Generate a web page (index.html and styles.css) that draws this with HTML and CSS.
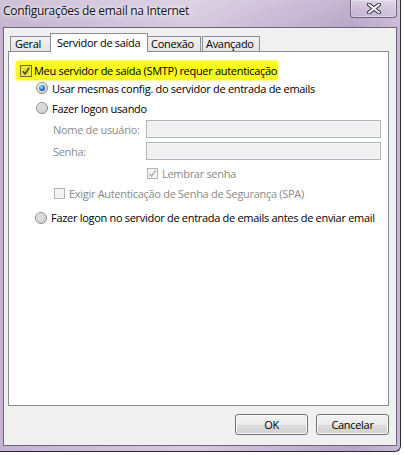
FILE: index.html
```html
<!DOCTYPE html>
<html lang="pt">
<head>
<meta charset="utf-8">
<title>Configurações de email na Internet</title>
<link rel="stylesheet" href="styles.css">
</head>
<body>
<div class="window">
  <div class="titlebar">
    <span class="title">Configurações de email na Internet</span>
    <div class="close">
      <svg width="14" height="11" viewBox="0 0 14 11"><path d="M2 1.5 L12 9.5 M12 1.5 L2 9.5" stroke="#3b3347" stroke-width="4" stroke-linecap="round"/><path d="M2 1.5 L12 9.5 M12 1.5 L2 9.5" stroke="#ffffff" stroke-width="2" stroke-linecap="round"/></svg>
    </div>
  </div>
  <div class="client">
    <div class="tabs">
      <div class="tab t-geral">Geral</div>
      <div class="tab active">Servidor de saída</div>
      <div class="tab t-conexao">Conexão</div>
      <div class="tab t-avancado">Avançado</div>
    </div>
    <div class="panel">
      <div class="row hl">
        <svg class="box" width="12" height="12" viewBox="0 0 12 12"><rect x="0.5" y="0.5" width="11" height="11" fill="#eded3a" stroke="#6d6d24"/><rect x="2.5" y="2.5" width="7" height="7" fill="#e1e12a"/><path d="M2.8 6.2 L5 9 L9.3 2.6" fill="none" stroke="#4b4b12" stroke-width="1.6"/></svg>
        <span>Meu servidor de saída (SMTP) requer autenticação</span>
      </div>
      <div class="row radio r1">
        <svg class="rad" width="12" height="12" viewBox="0 0 12 12"><defs><radialGradient id="rg" cx="40%" cy="35%" r="70%"><stop offset="0" stop-color="#ffffff"/><stop offset="1" stop-color="#cfcfcf"/></radialGradient><radialGradient id="rb" cx="40%" cy="35%" r="70%"><stop offset="0" stop-color="#bfe6ff"/><stop offset="0.5" stop-color="#3a8fd6"/><stop offset="1" stop-color="#113f7a"/></radialGradient></defs><circle cx="6" cy="6" r="5.5" fill="url(#rg)" stroke="#8b8b8b"/><circle cx="6" cy="6" r="3" fill="url(#rb)"/></svg>
        <span>Usar mesmas config. do servidor de entrada de emails</span>
      </div>
      <div class="row radio r2">
        <svg class="rad" width="12" height="12" viewBox="0 0 12 12"><circle cx="6" cy="6" r="5.5" fill="url(#rg)" stroke="#8b8b8b"/><circle cx="6" cy="6" r="3.5" fill="#dcdcdc" stroke="#c4c4c4" stroke-width="0.6"/></svg>
        <span>Fazer logon usando</span>
      </div>
      <div class="row field f1">
        <span class="lbl">Nome de usuário:</span>
        <div class="input"></div>
      </div>
      <div class="row field f2">
        <span class="lbl">Senha:</span>
        <div class="input"></div>
      </div>
      <div class="row dis lembrar">
        <svg class="box" width="11" height="11" viewBox="0 0 11 11"><rect x="0.5" y="0.5" width="10" height="10" fill="#f4f4f4" stroke="#b5b5b5"/><path d="M2.5 5.8 L4.6 8.3 L8.5 2.5" fill="none" stroke="#b0b0b0" stroke-width="1.4"/></svg>
        <span>Lembrar senha</span>
      </div>
      <div class="row dis exigir">
        <svg class="box" width="11" height="11" viewBox="0 0 11 11"><rect x="0.5" y="0.5" width="10" height="10" fill="#f4f4f4" stroke="#b5b5b5"/></svg>
        <span>Exigir Autenticação de Senha de Segurança (SPA)</span>
      </div>
      <div class="row radio r3">
        <svg class="rad" width="12" height="12" viewBox="0 0 12 12"><circle cx="6" cy="6" r="5.5" fill="url(#rg)" stroke="#8b8b8b"/><circle cx="6" cy="6" r="3.5" fill="#dcdcdc" stroke="#c4c4c4" stroke-width="0.6"/></svg>
        <span>Fazer logon no servidor de entrada de emails antes de enviar email</span>
      </div>
    </div>
    <div class="buttons">
      <div class="btn">OK</div>
      <div class="btn">Cancelar</div>
    </div>
  </div>
</div>
</body>
</html>
```

FILE: styles.css
```css
html, body {
  margin: 0;
  padding: 0;
}
body {
  width: 404px;
  height: 455px;
  overflow: hidden;
  background: #ffffff;
  font-family: "Open Sans", "Noto Sans", "DejaVu Sans", sans-serif;
  font-size: 11px;
  letter-spacing: -0.3px;
  color: #000;
}
.window {
  box-sizing: border-box;
  width: 401px;
  height: 452px;
  border-right: 1px solid #2f2838;
  border-bottom: 1px solid #2f2838;
  border-bottom-right-radius: 6px;
  background:
    linear-gradient(180deg, rgba(255,255,255,0.18), rgba(255,255,255,0) 30px),
    linear-gradient(90deg, #c3b3cf 0%, #cfc1da 30%, #d6c9df 48%, #c6b5d2 70%, #b8a5c6 88%, #c9b8d6 100%);
  display: flex;
  flex-direction: column;
}
.titlebar {
  height: 27px;
  display: flex;
  align-items: flex-start;
  justify-content: space-between;
}
.title {
  margin: 2px 0 0 3px;
  font-size: 12px;
  line-height: 18px;
  color: #111;
  text-shadow: 0 0 6px rgba(255,255,255,0.9), 0 0 3px rgba(255,255,255,0.9);
}
.close {
  box-sizing: border-box;
  width: 47px;
  height: 18px;
  margin-right: 3px;
  border: 1px solid #6e6180;
  border-top: none;
  border-radius: 0 0 4px 4px;
  background: linear-gradient(180deg, rgba(255,255,255,0.35), rgba(255,255,255,0.12) 55%, rgba(210,200,225,0.3));
  box-shadow: inset 0 0 0 1px rgba(255,255,255,0.35);
  display: flex;
  align-items: center;
  justify-content: center;
}
.client {
  box-sizing: border-box;
  margin-left: 3px;
  width: 394px;
  height: 419px;
  border: 1px solid #6f6479;
  background: #f0f0f0;
  display: flex;
  flex-direction: column;
}
.tabs {
  height: 18px;
  margin-top: 5px;
  padding-left: 6px;
  display: flex;
  align-items: flex-end;
}
.tab {
  box-sizing: border-box;
  height: 15px;
  border: 1px solid #898c95;
  border-bottom: none;
  background: linear-gradient(180deg, #f3f3f3, #e4e4e4);
  font-size: 11px;
  line-height: 14px;
  padding-left: 4px;
  margin-right: 1px;
}
.t-geral { width: 40px; border-right: none; margin-right: 0; }
.tab.active {
  width: 98px;
  height: 19px;
  margin-bottom: -1px;
  background: #ffffff;
  position: relative;
  z-index: 1;
  padding-top: 1px;
  padding-left: 6px;
  line-height: 15px;
  margin-right: 0;
}
.t-conexao { width: 53px; border-left: none; padding-left: 3px; }
.t-avancado { width: 58px; margin-left: 0; border-left: 1px solid #898c95; padding-left: 3px; }
.panel {
  box-sizing: border-box;
  margin-left: 4px;
  width: 381px;
  height: 355px;
  border: 1px solid #898c95;
  background: #ffffff;
  padding-top: 9px;
  display: flex;
  flex-direction: column;
}
.row {
  display: flex;
  align-items: center;
  white-space: nowrap;
}
.hl {
  box-sizing: border-box;
  width: 262px;
  height: 19px;
  margin-left: 7px;
  padding-left: 4px;
  gap: 2px;
  background: #fafa1e;
  border-radius: 3px;
  box-shadow: 0 0 2px 1px rgba(250,250,50,0.7);
}
.radio { height: 16px; gap: 4px; }
.r1 { margin-left: 27px; }
.r2 { margin-left: 27px; margin-top: 4px; }
.r3 { margin-left: 26px; margin-top: 10px; height: 15px; }
.field { height: 18px; margin-top: 4px; margin-left: 44px; }
.lbl { width: 93px; color: #8a8a8a; }
.input {
  box-sizing: border-box;
  width: 235px;
  height: 18px;
  border: 1px solid #adb3b9;
  background: #f0f0f0;
  box-shadow: inset 0 0 0 1px #f7f7f7;
}
.dis { color: #8a8a8a; height: 14px; margin-top: 6px; gap: 4px; }
.lembrar { margin-left: 138px; }
.exigir { margin-left: 45px; }
.box, .rad { flex: none; }
.buttons {
  display: flex;
  justify-content: flex-end;
  gap: 8px;
  width: 385px;
  margin-top: 8px;
}
.btn {
  box-sizing: border-box;
  width: 73px;
  height: 21px;
  border: 1px solid #707070;
  border-radius: 3px;
  background: linear-gradient(180deg, #f2f2f2 0%, #ebebeb 50%, #dddddd 51%, #cfcfcf 100%);
  box-shadow: inset 0 0 0 1px #fbfbfb;
  font-size: 11px;
  line-height: 19px;
  text-align: center;
}
```
